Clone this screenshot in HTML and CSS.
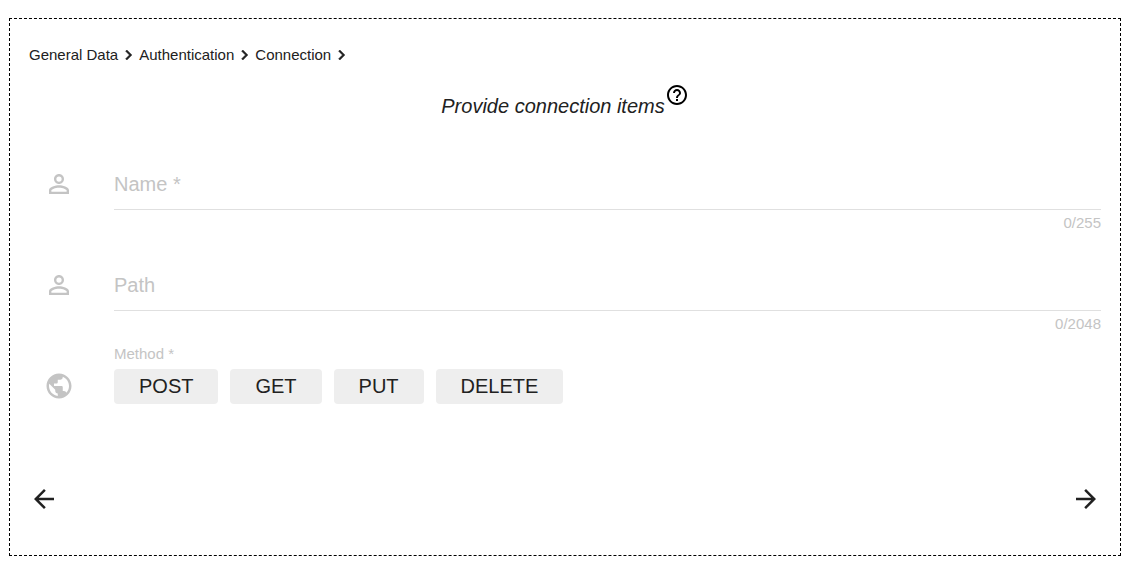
FILE: index.html
```html
<!DOCTYPE html>
<html lang="en">
<head>
<meta charset="utf-8">
<title>Connection</title>
<link rel="stylesheet" href="styles.css">
</head>
<body>
<main class="wizard">
  <nav class="breadcrumb" aria-label="Steps">
    <a href="#general">General Data</a>
    <svg class="chevron" viewBox="0 0 24 24" aria-hidden="true"><path d="M10 6L8.59 7.41 13.17 12l-4.58 4.59L10 18l6-6z"/></svg>
    <a href="#authentication">Authentication</a>
    <svg class="chevron" viewBox="0 0 24 24" aria-hidden="true"><path d="M10 6L8.59 7.41 13.17 12l-4.58 4.59L10 18l6-6z"/></svg>
    <a href="#connection">Connection</a>
    <svg class="chevron" viewBox="0 0 24 24" aria-hidden="true"><path d="M10 6L8.59 7.41 13.17 12l-4.58 4.59L10 18l6-6z"/></svg>
  </nav>

  <header class="heading">
    <h1 class="title">Provide connection items</h1>
    <button class="help" type="button" aria-label="Help">
      <svg class="help-icon" viewBox="0 0 24 24" aria-hidden="true"><path d="M11 18h2v-2h-2v2zm1-16C6.48 2 2 6.48 2 12s4.480 10 10 10 10-4.480 10-10S17.520 2 12 2zm0 18c-4.410 0-8-3.590-8-8s3.590-8 8-8 8 3.590 8 8-3.590 8-8 8zm0-14c-2.210 0-4 1.790-4 4h2c0-1.100.900-2 2-2s2 .900 2 2c0 2-3 1.750-3 5h2c0-2.250 3-2.500 3-5 0-2.210-1.790-4-4-4z"/></svg>
    </button>
  </header>

  <form class="form">
    <div class="row">
      <svg class="icon" viewBox="0 0 24 24" aria-hidden="true"><path d="M12 5.900a2.100 2.100 0 1 1 0 4.200 2.100 2.100 0 0 1 0-4.200m0 9c2.970 0 6.100 1.460 6.100 2.100v1.100H5.900V17c0-.640 3.130-2.100 6.100-2.100M12 4C9.790 4 8 5.790 8 8s1.790 4 4 4 4-1.790 4-4-1.790-4-4-4zm0 9c-2.670 0-8 1.340-8 4v3h16v-3c0-2.660-5.330-4-8-4z"/></svg>
      <div class="field">
        <input class="input" type="text" maxlength="255" placeholder="Name *" aria-label="Name" required>
        <span class="counter">0/255</span>
      </div>
    </div>
    <div class="row">
      <svg class="icon" viewBox="0 0 24 24" aria-hidden="true"><path d="M12 5.900a2.100 2.100 0 1 1 0 4.200 2.100 2.100 0 0 1 0-4.200m0 9c2.970 0 6.100 1.460 6.100 2.100v1.100H5.900V17c0-.640 3.130-2.100 6.100-2.100M12 4C9.790 4 8 5.790 8 8s1.790 4 4 4 4-1.790 4-4-1.790-4-4-4zm0 9c-2.670 0-8 1.340-8 4v3h16v-3c0-2.660-5.330-4-8-4z"/></svg>
      <div class="field">
        <input class="input" type="text" maxlength="2048" placeholder="Path" aria-label="Path">
        <span class="counter">0/2048</span>
      </div>
    </div>
    <div class="row row-method">
      <svg class="icon" viewBox="0 0 24 24" aria-hidden="true"><path d="M12 2C6.480 2 2 6.480 2 12s4.480 10 10 10 10-4.480 10-10S17.520 2 12 2zm-1 17.930c-3.950-.490-7-3.850-7-7.930 0-.620.080-1.210.210-1.790L9 15v1c0 1.100.900 2 2 2v1.930zm6.900-2.540c-.260-.810-1-1.390-1.900-1.390h-1v-3c0-.550-.450-1-1-1H8v-2h2c.550 0 1-.450 1-1V7h2c1.100 0 2-.900 2-2v-.410c2.930 1.190 5 4.060 5 7.410 0 2.080-.800 3.970-2.100 5.390z"/></svg>
      <div class="field" role="group" aria-labelledby="method-label">
        <span class="label" id="method-label">Method *</span>
        <div class="methods">
          <button class="method" type="button">POST</button>
          <button class="method" type="button">GET</button>
          <button class="method" type="button">PUT</button>
          <button class="method" type="button">DELETE</button>
        </div>
      </div>
    </div>
  </form>

  <footer class="actions">
    <button class="arrow" type="button" aria-label="Back">
      <svg class="arrow-icon" viewBox="0 0 24 24" aria-hidden="true"><path d="M20 11H7.830l5.590-5.590L12 4l-8 8 8 8 1.410-1.410L7.830 13H20v-2z"/></svg>
    </button>
    <button class="arrow" type="button" aria-label="Next">
      <svg class="arrow-icon" viewBox="0 0 24 24" aria-hidden="true"><path d="M12 4l-1.410 1.410L16.170 11H4v2h12.170l-5.580 5.590L12 20l8-8z"/></svg>
    </button>
  </footer>
</main>
</body>
</html>
```
FILE: styles.css
```css
* {
  box-sizing: border-box;
}

body {
  margin: 18px 24px 18px 9px;
  background: #fff;
  color: #212121;
  font-family: "Liberation Sans", Arial, sans-serif;
  font-size: 20px;
}

button {
  border: 0;
  background: none;
  color: inherit;
  font: inherit;
  cursor: pointer;
}

svg {
  display: block;
  flex: none;
  fill: currentColor;
}

.wizard {
  padding: 26px 19px 41px;
  border: 1px dashed #000;
}

.breadcrumb {
  display: flex;
  align-items: center;
  font-size: 15px;
  line-height: 20px;
}

.breadcrumb a {
  color: inherit;
  text-decoration: none;
}

.chevron {
  width: 21px;
  height: 20px;
  stroke: currentColor;
  stroke-width: 0.7;
}

.heading {
  display: flex;
  justify-content: center;
  align-items: flex-start;
  margin-top: 18px;
}

.title {
  margin: 11px 0 0;
  font-size: 20px;
  font-style: italic;
  font-weight: 400;
  line-height: 24px;
}

.help {
  padding: 0;
}

.help-icon {
  width: 24px;
  height: 24px;
  color: #000;
}

.form {
  margin-top: 51px;
}

.row {
  display: grid;
  grid-template-columns: 30px 1fr;
  column-gap: 40px;
  min-height: 101px;
  padding-left: 15px;
}

.icon {
  width: 30px;
  height: 30px;
  color: #c4c4c4;
}

.field {
  display: flex;
  flex-direction: column;
}

.input {
  width: 100%;
  height: 41px;
  padding: 0 0 10px;
  border: 0;
  border-bottom: 1px solid #e0e0e0;
  outline: 0;
  background: none;
  color: inherit;
  font: inherit;
}

.input::placeholder {
  color: #c4c4c4;
  opacity: 1;
}

.counter {
  margin-top: 4px;
  color: #c4c4c4;
  font-size: 15px;
  line-height: 18px;
  text-align: right;
}

.row-method {
  align-items: start;
}

.label {
  margin-top: -26px;
  color: #c4c4c4;
  font-size: 15px;
  line-height: 18px;
}

.methods {
  display: flex;
  flex-wrap: wrap;
  gap: 12px;
  margin-top: 6px;
}

.method {
  height: 35px;
  padding: 0 25px;
  border-radius: 4px;
  background: #eee;
}

.actions {
  display: flex;
  justify-content: space-between;
  margin-top: 12px;
}

.arrow {
  padding: 0;
}

.arrow-icon {
  width: 30px;
  height: 30px;
}
```
